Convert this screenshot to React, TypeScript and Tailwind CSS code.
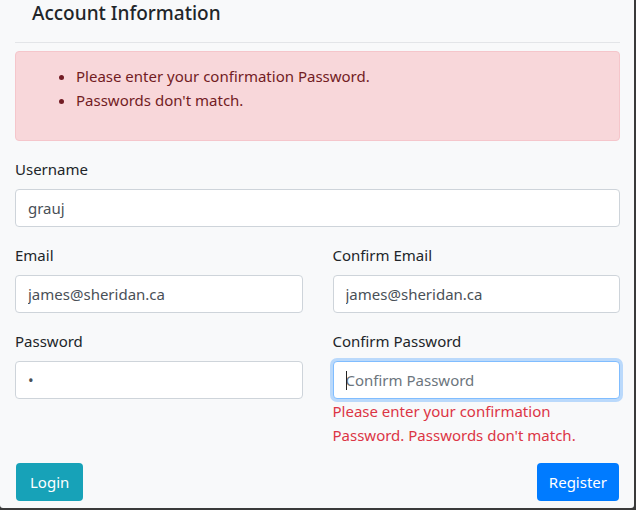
import React from 'react';

const font = { fontFamily: '"Noto Sans", "Open Sans", Arial, sans-serif' };

function Field({
  label,
  value,
  type = 'text',
}: {
  label: string;
  value: string;
  type?: string;
}) {
  return (
    <div className="mb-4">
      <label className="mb-2 block text-[15px] leading-6 text-[#212529]">{label}</label>
      <input
        type={type}
        value={value}
        readOnly
        className="block h-[38px] w-full rounded-[4px] border border-[#ced4da] bg-white px-3 text-[15px] text-[#495057] outline-none"
      />
    </div>
  );
}

export default function App() {
  return (
    <div className="h-[510px] w-[636px] bg-[#3a3a3a]" style={font}>
      <div className="h-[508px] w-[634px] overflow-hidden rounded-b-[3px] bg-[#f8f9fa] pl-[15px] pr-[14px]">
        <h5 className="pt-px pl-[17px] text-[19px] leading-6 font-medium text-[#212529]">Account Information</h5>
        <hr className="mt-[17px] mb-2 border-t border-[#e3e5e8]" />

        <div className="mb-4 rounded-[4px] border border-[#f5c6cb] bg-[#f8d7da] px-5 py-3 text-[#721c24]">
          <ul className="mb-4 list-disc pl-10 text-[15px] leading-6">
            <li>Please enter your confirmation Password.</li>
            <li>Passwords don't match.</li>
          </ul>
        </div>

        <Field label="Username" value="grauj" />

        <div className="grid grid-cols-2 gap-x-[30px]">
          <Field label="Email" value="james@sheridan.ca" />
          <Field label="Confirm Email" value="james@sheridan.ca" />
          <Field label="Password" value="a" type="password" />
          <div className="mb-4">
            <label className="mb-2 block text-[15px] leading-6 text-[#212529]">Confirm Password</label>
            <div className="relative">
              <input
                type="password"
                value=""
                readOnly
                placeholder="Confirm Password"
                className="block h-[38px] w-full rounded-[4px] border border-[#80bdff] bg-white px-3 text-[15px] text-[#495057] shadow-[0_0_0_3px_rgba(0,123,255,0.25)] outline-none placeholder:text-[#6c757d]"
              />
              <span className="absolute top-[10px] left-[13px] h-[19px] w-px bg-[#222]" />
            </div>
            <div className="text-[15px] leading-6 text-[#dc3545]">
              Please enter your confirmation
              <br />
              Password. Passwords don't match.
            </div>
          </div>
        </div>

        <div className="flex items-center justify-between pl-px pr-px">
          <button className="h-[38px] rounded-[4px] bg-[#17a2b8] px-[14px] text-[15px] text-white">Login</button>
          <button className="h-[38px] rounded-[4px] bg-[#007bff] px-3 text-[15px] text-white">Register</button>
        </div>
      </div>
    </div>
  );
}
